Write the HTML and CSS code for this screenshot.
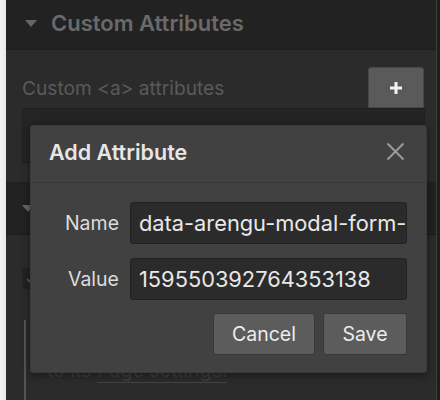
FILE: index.html
```html
<!DOCTYPE html>
<html>
<head>
<meta charset="utf-8">
<link rel="stylesheet" href="styles.css">
</head>
<body>
<div class="page">
  <div class="edge"></div>
  <div class="panel">
    <div class="sec-head">
      <span class="tri"></span>
      <span class="sec-title">Custom Attributes</span>
    </div>
    <div class="sec-body">
      <div class="attr-row">
        <span class="attr-label">Custom &lt;a&gt; attributes</span>
        <button class="plus-btn"><svg width="14" height="14" viewBox="0 0 14 14"><path d="M7 1v12M1 7h12" stroke="#f2f2f2" stroke-width="3"/></svg></button>
      </div>
      <div class="attr-list"></div>
    </div>
    <div class="sec-head sec-head2">
      <span class="tri"></span>
    </div>
    <div class="sec-body2">
      <div class="check"><svg width="12" height="12" viewBox="0 0 12 12"><path d="M2 6l3 3 5-6" stroke="#555" stroke-width="2" fill="none"/></svg></div>
      <div class="note">
        <div class="note-text">to its <span class="u">Page settings.</span></div>
        <div class="note-link">Show title</div>
      </div>
    </div>
  </div>
  <div class="right-edge"></div>

  <div class="modal">
    <div class="modal-head">
      <span class="modal-title">Add Attribute</span>
      <svg class="close" width="19" height="19" viewBox="0 0 19 19"><path d="M1.5 1.5L17.5 17.5M17.5 1.5L1.5 17.5" stroke="#9a9a9a" stroke-width="2"/></svg>
    </div>
    <div class="modal-body">
      <div class="field">
        <label class="field-label">Name</label>
        <div class="input">data-arengu-modal-form-</div>
      </div>
      <div class="field">
        <label class="field-label">Value</label>
        <div class="input">159550392764353138</div>
      </div>
      <div class="actions">
        <button class="btn btn-cancel">Cancel</button>
        <button class="btn btn-save">Save</button>
      </div>
    </div>
  </div>
</div>
</body>
</html>
```

FILE: styles.css
```css
html, body {
  margin: 0;
  padding: 0;
  background: #f0f0f0;
  font-family: Inter, "Noto Sans", sans-serif;
}
.page {
  position: relative;
  display: flex;
  width: 440px;
  height: 400px;
  overflow: hidden;
}
.edge {
  width: 6px;
  flex-shrink: 0;
  background: linear-gradient(to right, #f4f4f4, #e8e8e8);
}
.panel {
  width: 430px;
  flex-shrink: 0;
  background: #2b2b2b;
  border-right: 1px solid #3c3c3c;
  display: flex;
  flex-direction: column;
}
.panel > * {
  flex-shrink: 0;
}
.right-edge {
  flex: 1;
  background: #1e1e1e;
}
.sec-head {
  background: #222222;
  border-bottom: 1px solid #1c1c1c;
  display: flex;
  align-items: center;
  padding: 0 0 3px 19px;
  box-sizing: border-box;
  height: 50px;
  gap: 14px;
}
.tri {
  width: 0;
  height: 0;
  border-left: 6px solid transparent;
  border-right: 6px solid transparent;
  border-top: 7px solid #666;
}
.sec-title {
  font-size: 22px;
  font-weight: 600;
  color: #6a6a6a;
}
.sec-body {
  padding: 17px 11px 0 16px;
  height: 132px;
  box-sizing: border-box;
}
.attr-row {
  display: flex;
  justify-content: space-between;
  align-items: center;
  height: 41px;
}
.attr-label {
  font-size: 19.2px;
  color: #5a5a5a;
}
.plus-btn {
  width: 56px;
  height: 41px;
  background: #5a5a5a;
  border: 1px solid #474747;
  border-radius: 3px 3px 0 0;
  display: flex;
  align-items: center;
  justify-content: center;
  padding: 0;
  margin-right: 1px;
}
.attr-list {
  height: 55px;
  background: #242424;
  border: 1px solid #1f1f1f;
  border-radius: 2px;
  box-sizing: border-box;
}
.sec-head2 {
  height: 53px;
  padding: 0 0 0 16px;
}
.sec-body2 {
  flex: 1;
  padding: 33px 0 0 16px;
}
.check {
  width: 40px;
  height: 21px;
  background: #222;
  border-radius: 3px;
  display: flex;
  align-items: center;
  padding-left: 3px;
  box-sizing: border-box;
}
.note {
  margin-top: 31px;
  border-left: 2px solid #555;
  margin-left: 2px;
  padding-left: 21px;
  padding-top: 40px;
  height: 120px;
}
.note-text {
  font-size: 19.5px;
  color: #3e3e3e;
  line-height: 20px;
}
.u {
  border-bottom: 1px solid #444;
}
.note-link {
  margin-top: 16px;
  font-size: 19.5px;
  color: #2f5275;
}
.modal {
  position: absolute;
  left: 30px;
  top: 125px;
  width: 397px;
  height: 248px;
  background: #414141;
  border-radius: 3px;
  box-shadow: 0 2px 8px rgba(0,0,0,0.45);
  border: 1px solid #3a3a3a;
  box-sizing: border-box;
  display: flex;
  flex-direction: column;
}
.modal-head {
  height: 57px;
  flex-shrink: 0;
  box-sizing: border-box;
  border-bottom: 1px solid #363636;
  display: flex;
  align-items: center;
  justify-content: space-between;
  padding: 0 21px 5px 18px;
}
.modal-title {
  font-size: 21.5px;
  font-weight: 600;
  color: #e6e6e6;
}
.modal-body {
  padding: 19px 19px 0 10px;
  display: flex;
  flex-direction: column;
  gap: 14px;
}
.field {
  display: flex;
  align-items: center;
  gap: 11px;
}
.field-label {
  width: 78px;
  text-align: right;
  font-size: 19.5px;
  color: #dcdcdc;
}
.input {
  flex: 1;
  height: 42px;
  box-sizing: border-box;
  background: #2b2b2b;
  border: 1px solid #222;
  border-radius: 3px;
  padding-left: 8px;
  display: flex;
  align-items: center;
  font-size: 21.8px;
  color: #e8e8e8;
  white-space: nowrap;
  overflow: hidden;
}
.actions {
  display: flex;
  justify-content: flex-end;
  gap: 8px;
  margin-top: -1px;
}
.btn {
  height: 42px;
  background: #5c5c5c;
  border: 1px solid #383838;
  border-radius: 3px;
  font-family: Inter, "Noto Sans", sans-serif;
  font-size: 19.5px;
  color: #ececec;
  padding: 0;
}
.btn-cancel { width: 102px; }
.btn-save { width: 84px; }
```
